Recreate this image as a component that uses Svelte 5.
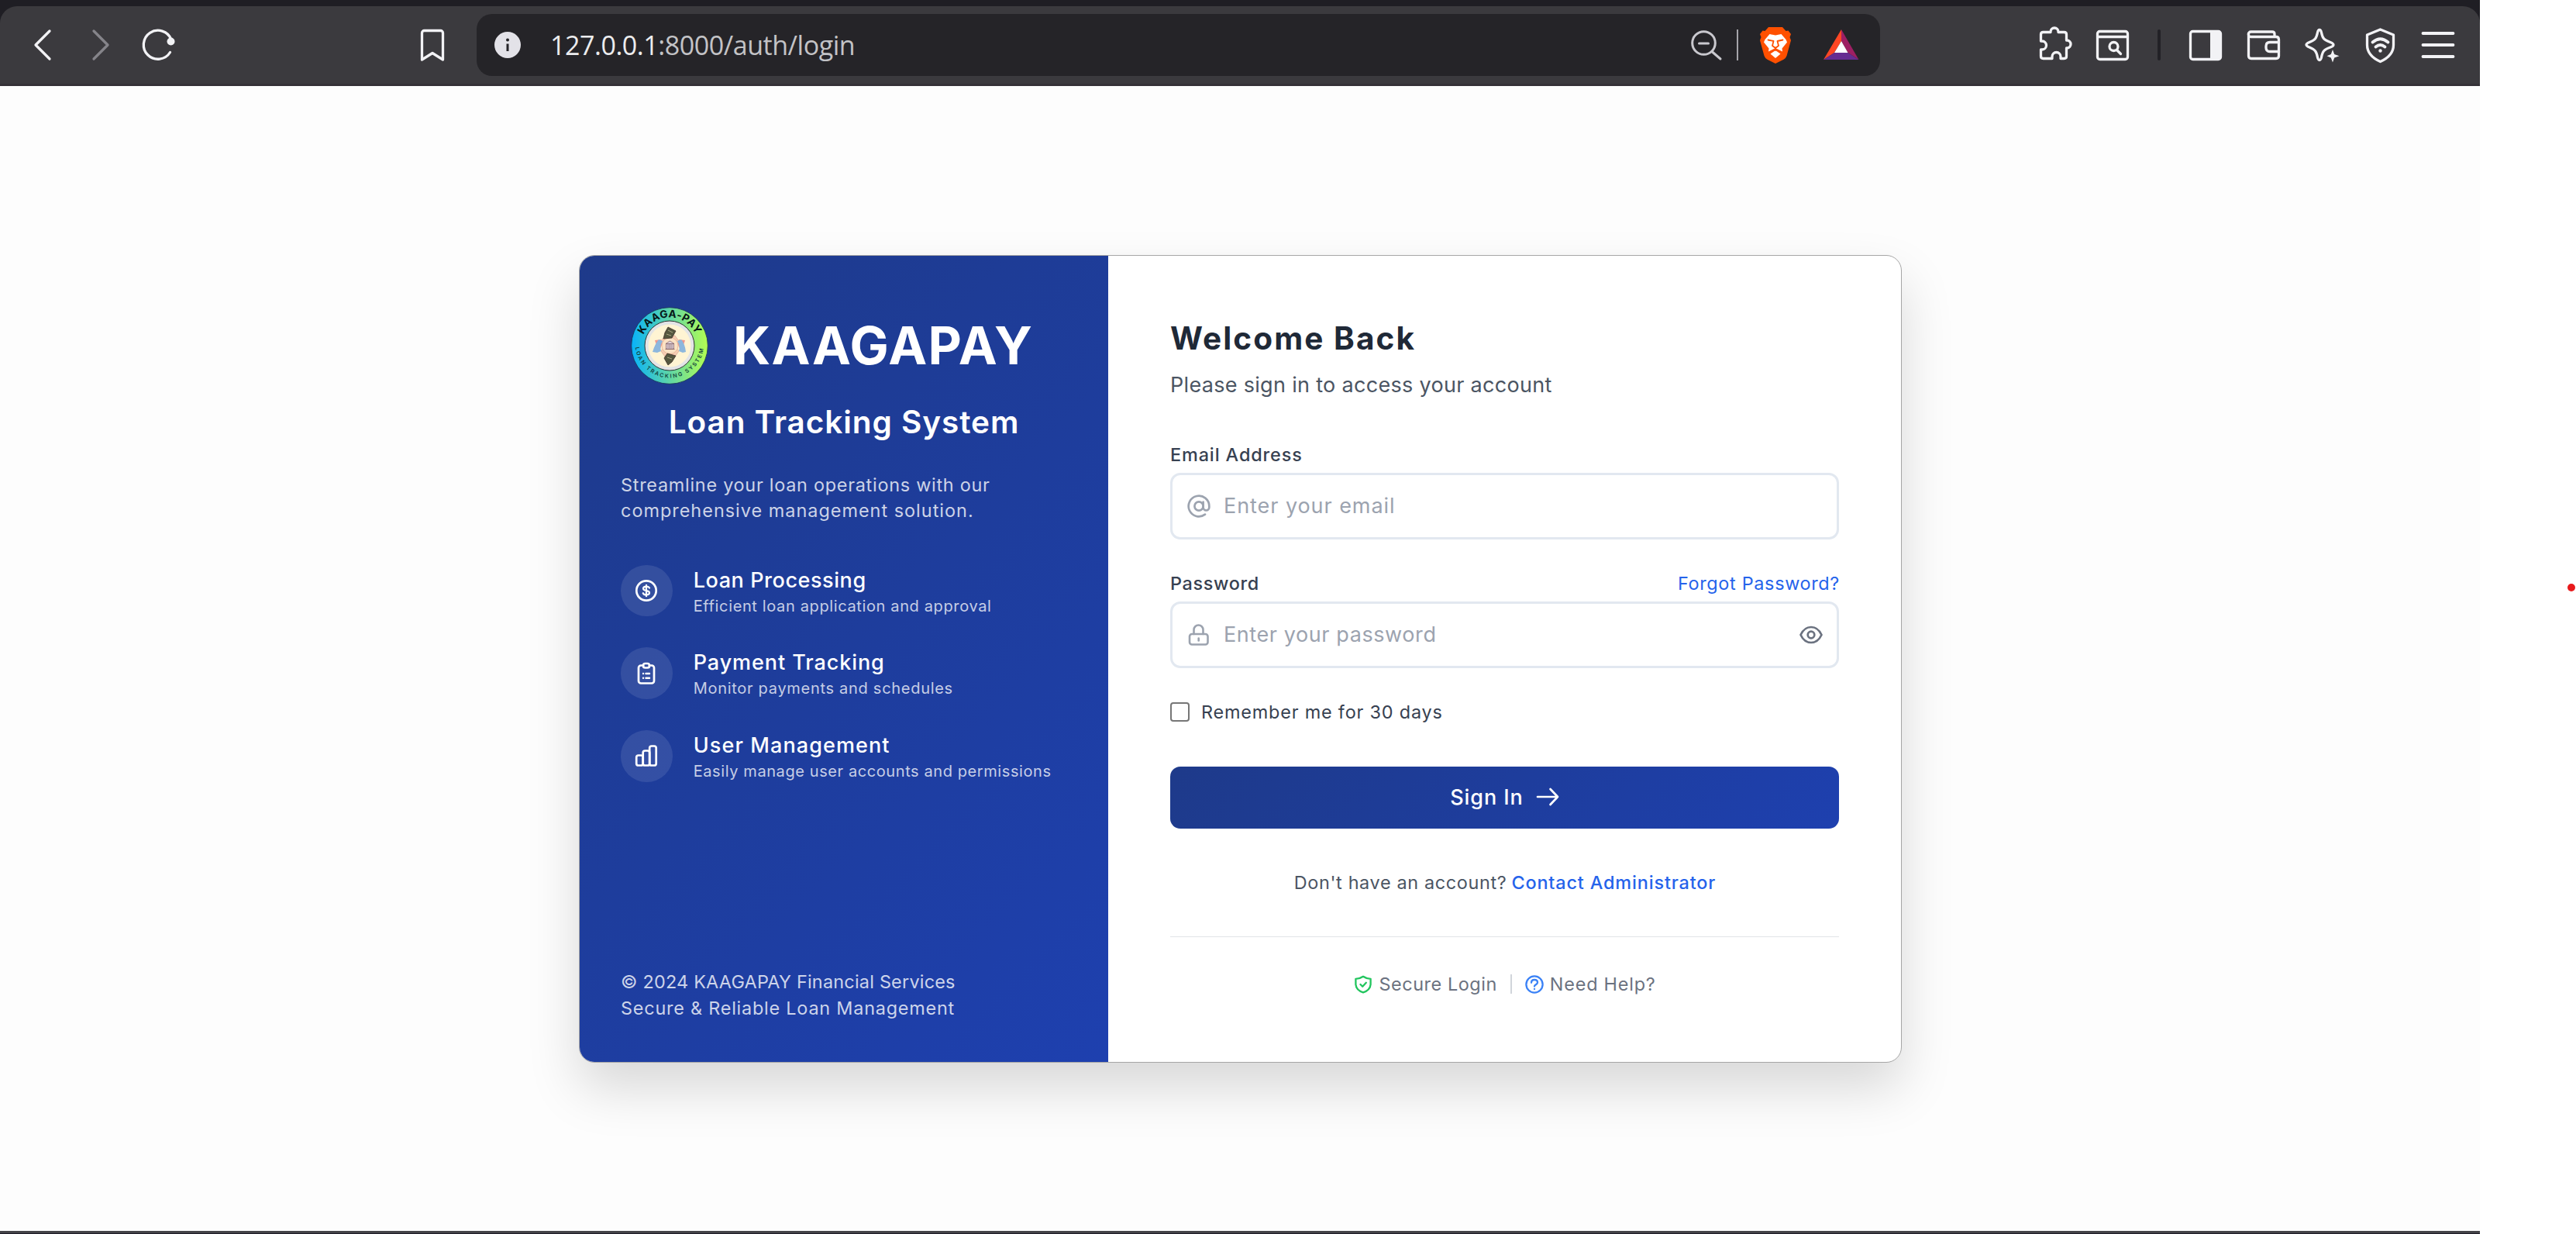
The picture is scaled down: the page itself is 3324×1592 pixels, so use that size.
<script>
  const features = [
    { icon: 'dollar', title: 'Loan Processing', text: 'Efficient loan application and approval', cls: 'f1' },
    { icon: 'clipboard', title: 'Payment Tracking', text: 'Monitor payments and schedules', cls: 'f2' },
    { icon: 'bars', title: 'User Management', text: 'Easily manage user accounts and permissions', cls: 'f3' }
  ];
</script>

<div class="screen">
  <div class="browser">
    <header class="tabstrip">
      <div class="toolbar">
        <svg class="ico back" viewBox="0 0 48 48"><path d="M33 6 15 24l18 18" /></svg>
        <svg class="ico forward" viewBox="0 0 48 48"><path d="M15 6l18 18-18 18" /></svg>
        <svg class="ico reload" viewBox="0 0 48 48"><path d="M39.500 33.500A18.500 18.500 0 1 1 41 17" /><circle class="solid" cx="40.500" cy="19.500" r="5" /></svg>
        <svg class="ico bookmark" viewBox="0 0 48 48"><path d="M10.500 43V8.500a3 3 0 0 1 3-3h21a3 3 0 0 1 3 3V43L24 34.500z" /></svg>

        <div class="address">
          <svg class="info" viewBox="0 0 34 34"><circle cx="17" cy="17" r="17" fill="#e3e2e8" /><path d="M17 15.500v9.500" stroke="#252428" stroke-width="3" /><circle cx="17" cy="10.500" r="2" fill="#252428" /></svg>
          <span class="url"><b>127.0.0.1</b>:8000/auth/login</span>
          <svg class="ico zoomout" viewBox="0 0 48 48"><circle cx="20.500" cy="21.500" r="14.800" /><path d="M31 32.500 42 42M14.500 22h12" /></svg>
          <i class="bar-sep"></i>
          <svg class="ico brave" viewBox="0 0 48 48">
            <path fill="#ff5000" d="M15 1h18l4.500 5 3-.500L44 10l-1.500 4 1.500 4-5.500 20q-1 3-4 4.800L24 48l-10.500-5.200q-3-1.800-4-4.800L4 18l1.500-4L4 10l3.500-4.500 3 .500z" />
            <path fill="#fff" d="M16.500 10 24 11.500l7.500-1.500 6 7 1.500 3.500-6.500 8 .5 4-9-4.500-9 4.500.5-4-6.500-8 1.500-3.500z" />
            <path fill="#fff" d="M17.500 35.500 24 31l6.500 4.500L24 41z" />
            <path d="m14.500 17.500 7 1.500-1.500 6 4 3 4-3-1.500-6 7-1.500" stroke="#ff5000" stroke-width="1.800" fill="none" />
            <path d="M24 27.500V31" stroke="#ff5000" stroke-width="1.800" />
          </svg>
          <svg class="ico bat" viewBox="0 0 48 48"><path fill="#ff4724" d="M24 4 1 43l14-9 9-15z" /><path fill="#9e1f63" d="m24 4 22.500 39-14-9L24 19z" /><path fill="#662d91" d="M1 43h45.500l-14-9H15z" /><path fill="#fff" d="m24 19 8.500 15H15z" /></svg>
        </div>

        <svg class="ico puzzle" viewBox="0 0 48 48"><path d="M17 7.500V7a5 5 0 0 1 10 0v.500h7.500q3 0 3 3V18h1a5 5 0 0 1 4.500 5 5 5 0 0 1-4.500 5h-1v10.500q0 3-3 3H30V39a5.500 5.500 0 0 0-11 0v2.500H7.500q-3 0-3-3V30H6a5.500 5.500 0 0 0 0-11H4.500v-8.500q0-3 3-3z" /></svg>
        <svg class="ico pagefind" viewBox="0 0 48 48"><rect x="4.500" y="6.500" width="39" height="36" rx="3" /><path d="M5 13.500h38" /><circle cx="25.500" cy="26" r="5.500" /><path d="m29.500 30.500 5 5" /></svg>
        <i class="tool-sep"></i>
        <svg class="ico panel" viewBox="0 0 48 48"><rect x="4.500" y="6.500" width="39" height="36" rx="3" /><path class="solid" d="M30 6.500h11q2.500 0 2.500 2.500v31q0 2.500-2.500 2.500H30z" /></svg>
        <svg class="ico wallet" viewBox="0 0 48 48"><path d="M4.500 10v28q0 3.500 3.500 3.500h32q3.500 0 3.500-3.500V17q0-3.500-3.500-3.500H7.500a3.200 3.200 0 0 1 0-6.500H35q3 0 3 3v3" /><path d="M43.500 20.500H32q-5 0-5 5v2q0 5 5 5h11.500" /></svg>
        <svg class="ico spark" viewBox="0 0 48 48"><path d="M21 4.500c1.500 0 2 1 2.500 3.500 1.500 7.500 3 9.500 11.500 12.500 2.500 1 4 1.800 4 3.300s-1.500 2.300-4 3.200C26.500 30 25 32.500 23.500 40c-.5 2.500-1 3.500-2.500 3.500S19 42.500 18.500 40c-1.500-7.500-3-10-10.500-13-2.500-1-4-1.700-4-3.200s1.500-2.300 4-3.300C15.500 17.500 17 15.500 18.500 8c.5-2.500 1-3.500 2.500-3.500z" /><path class="solid" d="m38 30 2.200 6 6.300 2.200-6.300 2.300L38 46.500l-2.200-6-5.300-2.300 5.300-2.200z" /></svg>
        <svg class="ico vpn" viewBox="0 0 48 48"><path d="M24.500 4 41.500 11v13c0 10-7 17-17 21.500C14.500 41 7.500 34 7.500 24V11z" /><path d="M14.500 20.500q10-8.500 20 0M18.500 26.500q6-5 12 0" stroke-width="3.800" /><circle class="solid" cx="24.500" cy="31.500" r="2.200" /></svg>
        <svg class="ico menu" viewBox="0 0 48 48"><path d="M4.500 9h39M4.500 24h39M4.500 39h39" /></svg>
      </div>
    </header>

    <main class="page">
      <section class="card">
        <aside class="brand">
          <div class="brand-row">
            <svg class="logo" viewBox="0 0 100 100">
              <defs>
                <linearGradient id="ring" x1="0" y1="0" x2="1" y2="0"><stop offset="0" stop-color="#08b2fb" /><stop offset=".5" stop-color="#5fd6a6" /><stop offset="1" stop-color="#b3fd52" /></linearGradient>
                <path id="arcTop" d="M13.500 50A36.500 36.500 0 0 1 86.500 50" />
                <path id="arcBottom" d="M5.500 47A44.500 44.500 0 0 0 94.500 47" />
              </defs>
              <circle cx="50" cy="50" r="49.300" fill="url(#ring)" stroke="#16324f" stroke-width=".8" />
              <circle cx="50" cy="50" r="32" fill="#e3e4e6" stroke="#222" stroke-width=".9" />
              <circle cx="50" cy="50" r="27.500" fill="#fff4d3" />
              <text class="logo-top"><textPath href="#arcTop" startOffset="50%" text-anchor="middle">KAAGA-PAY</textPath></text>
              <text class="logo-bottom"><textPath href="#arcBottom" startOffset="50%" text-anchor="middle">LOAN TRACKING SYSTEM</textPath></text>
              <path fill="#f0978c" d="m31 43 8-1 2 5-5 11-5-3 2-6zM70 43l-8-1-2 5 5 11 5-3-2-6z" />
              <path fill="#f6cdb4" stroke="#d79f86" stroke-width=".6" d="m39 44 5-7 13 0 5 7-3 4-9-4-8 4zM39 57l5 7h13l5-7-3-4-9 5-8-5z" />
              <path fill="#8db7dd" d="m36 42 5 2q-4 6-2 13l-5 2-6-1q3-10 8-16zM65 42l-5 2q4 6 2 13l5 2 4-1q-1-10-6-16z" />
              <circle cx="50.500" cy="50" r="10.500" fill="#fbe2c4" stroke="#e7b18f" stroke-width=".8" />
              <path fill="#55573f" stroke="#41312b" stroke-width=".8" d="m48 26 10 5-5 9-11 1 2-8zM47 60l11 3-5 8-5 4-5-9z" />
              <path stroke="#a9a583" stroke-width="1" d="m48 30 6 3M46 35l6 2M47 65l6 2" />
              <path fill="#e3d4dc" stroke="#7c5a60" stroke-width=".7" d="M45.500 47 50.500 44l5 3v7h-10z" />
              <path stroke="#7c5a60" stroke-width=".8" d="M48 48v5M50.500 48v5M53 48v5M44.500 54.500h12M45 47.500h11" />
            </svg>
            <h1>KAAGAPAY</h1>
          </div>
          <h2>Loan Tracking System</h2>
          <p class="lead"><span class="l1">Streamline your loan operations with our</span><span class="l2">comprehensive management solution.</span></p>

          <ul class="features">
            {#each features as f}
              <li class={f.cls}>
                <span class="disc">
                  <svg viewBox="0 0 32 32">
                    {#if f.icon === 'dollar'}
                      <circle cx="16" cy="16" r="12.700" />
                      <path d="M20 12.600c-.6-1.400-2-2-4-2-2.400 0-4 1-4 2.700s1.500 2.300 4 2.700 4 1 4 2.700-1.600 2.700-4 2.700c-2.200 0-3.600-.8-4.200-2.200M16 8.800v14.400" stroke-width="2.200" />
                    {:else if f.icon === 'clipboard'}
                      <path d="M12 5.500H9A3 3 0 0 0 6 8.500v17a3 3 0 0 0 3 3h14a3 3 0 0 0 3-3v-17a3 3 0 0 0-3-3h-3" />
                      <rect x="12" y="3" width="8" height="5.500" rx="2.500" />
                      <path d="M15.500 16H20M15.500 21.700H20M12 16h.01M12 21.700h.01" stroke-width="2.500" />
                    {:else}
                      <rect x="3.200" y="15.500" width="8.500" height="13" rx="2.600" />
                      <rect x="11.700" y="9.500" width="8.500" height="19" rx="2.600" />
                      <rect x="20.200" y="3.500" width="8.500" height="25" rx="2.600" />
                    {/if}
                  </svg>
                </span>
                <div><strong>{f.title}</strong><small>{f.text}</small></div>
              </li>
            {/each}
          </ul>

          <footer><span class="c1">© 2024 KAAGAPAY Financial Services</span><span class="c2">Secure &amp; Reliable Loan Management</span></footer>
        </aside>

        <div class="panel-form">
          <h3>Welcome Back</h3>
          <p class="sub">Please sign in to access your account</p>

          <div class="label-row"><label class="lab-email" for="email">Email Address</label></div>
          <div class="field">
            <svg class="lead-ico" viewBox="0 0 24 24"><circle cx="12" cy="12" r="4.200" /><path d="M16.200 8v5.200a2.900 2.900 0 0 0 5.800 0V12a10 10 0 1 0-4 8" /></svg>
            <input id="email" class="in-email" type="text" placeholder="Enter your email" />
          </div>

          <div class="label-row second"><label class="lab-pass" for="pass">Password</label><a class="forgot" href="#forgot">Forgot Password?</a></div>
          <div class="field">
            <svg class="lead-ico lock" viewBox="0 0 32 32"><path d="M9.500 15V9.500a6 6 0 0 1 12 0V15" /><rect x="4" y="15" width="23.500" height="13.500" rx="3" /><path d="M15.700 20.500v3" /></svg>
            <input id="pass" class="in-pass" type="text" placeholder="Enter your password" />
            <svg class="eye" viewBox="0 0 30 24"><path d="M1.500 12C5 4.500 10 2 15 2s10 2.500 13.500 10C25 19.500 20 22 15 22S5 19.500 1.500 12z" /><circle cx="15" cy="12" r="4.300" /></svg>
          </div>

          <label class="remember"><input type="checkbox" /><span>Remember me for 30 days</span></label>

          <button class="signin" type="button"><span>Sign In</span><svg viewBox="0 0 30 24"><path d="M2 12h26M18.500 2 28 12l-9.500 10" /></svg></button>

          <p class="contact"><span>Don't have an account?</span><a href="#admin">Contact Administrator</a></p>

          <div class="links">
            <span class="link secure"><svg viewBox="0 0 24 24"><path d="M12 1.800c2.800 2 5.800 2.900 9.600 3v6.400c0 5.500-3.600 9.200-9.600 11.200-6-2-9.600-5.700-9.600-11.200V4.800c3.800-.1 6.800-1 9.600-3z" /><path d="m8.500 12 2.700 2.700 4.600-4.900" /></svg><em>Secure Login</em></span>
            <i class="link-sep"></i>
            <span class="link help"><svg viewBox="0 0 24 24"><circle cx="12" cy="12" r="10.600" /><path d="M8 9.800c0-2.300 1.700-3.800 4-3.800s4 1.400 4 3.500c0 2.600-4 2.700-4 5M12 17.800v.3" /></svg><em>Need Help?</em></span>
          </div>
        </div>
      </section>
    </main>
    <div class="taskbar-edge"></div>
  </div>
  <div class="gutter"><i class="dot"></i></div>
</div>

<style>
  :global(body) { background: #fff; overflow: hidden; }
  * { box-sizing: border-box; }
  h1, h2, h3, p, ul { margin: 0; padding: 0; }
  a { text-decoration: none; }
  .screen { display: flex; width: 3324px; height: 1592px; font-family: Inter, "Liberation Sans", sans-serif; background: #fff; }
  .browser { display: flex; flex-direction: column; width: 3200px; height: 1592px; }
  .gutter { width: 124px; display: flex; align-items: flex-start; justify-content: flex-end; padding: 753px 1px 0 0; }
  .dot { width: 10px; height: 10px; border-radius: 50%; background: #e81a1c; }

  .tabstrip { background: #1f1e24; padding-top: 8px; flex: none; }
  .toolbar { display: flex; align-items: center; height: 103px; padding: 0 30px 0 31px; background: #3b3a3e; border-bottom: 3px solid #353238; border-radius: 22px 22px 0 0; }
  .ico { width: 48px; height: 48px; flex: none; fill: none; stroke: #f2f2f5; stroke-width: 3.300; stroke-linecap: round; stroke-linejoin: round; overflow: visible; }
  .solid { fill: #f2f2f5; stroke: none; }
  .forward { margin-left: 27px; stroke: #85848a; }
  .reload { margin-left: 26px; }
  .bookmark { margin-left: 306px; }
  .address { display: flex; align-items: center; width: 1811px; height: 80px; margin: 0 203px 0 33px; padding: 0 26px 0 23px; border-radius: 20px; background: #252428; }
  .info { width: 34px; height: 34px; flex: none; }
  .url { flex: 1; margin-left: 38px; font: 34px/48px "Open Sans", "Noto Sans", sans-serif; letter-spacing: -.460px; color: #c3c3c6; white-space: nowrap; }
  .url b { font-weight: 400; color: #ececee; }
  .zoomout { stroke: #c9c8ce; stroke-width: 3; }
  .bar-sep { width: 2px; height: 40px; margin: 0 24px 0 15px; background: #a5a4aa; }
  .brave, .bat { stroke: none; }
  .bat { margin-left: 37px; }
  .pagefind { margin-left: 25px; }
  .tool-sep { width: 4px; height: 40px; margin: 0 34px; border-radius: 2px; background: #222126; }
  .wallet, .spark, .vpn, .menu { margin-left: 27px; }
  .menu { stroke-width: 3.800; }

  .page { flex: 1; display: flex; align-items: flex-start; justify-content: center; padding: 218px 0 0 1px; background: #fdfdfd; }
  .taskbar-edge { height: 4px; flex: none; background: #444448; border-bottom: 1px solid #1f1e28; }
  .card { display: flex; width: 1707px; height: 1042px; border: 1px solid #a6a6a6; border-radius: 20px; background: #fff; overflow: hidden; box-shadow: 0 33px 67px rgba(0, 0, 0, .15); }

  .brand { display: flex; flex-direction: column; width: 682px; padding: 66px 53px 53px; color: #fff; background: linear-gradient(135deg, #1e3a8a, #1e40af); }
  .brand-row { display: flex; align-items: center; gap: 32px; height: 100px; padding-left: 13px; }
  .logo { width: 100px; height: 100px; flex: none; fill: none; }
  .logo-top { font: 700 13.500px Inter, sans-serif; letter-spacing: .4px; fill: #071616; }
  .logo-bottom { font: 600 7px Inter, sans-serif; letter-spacing: 2px; fill: #12413c; }
  h1 { font-size: 67px; line-height: 80px; font-weight: 700; letter-spacing: 1.400px; }
  h2 { margin-top: 25px; font-size: 40.500px; line-height: 48px; font-weight: 600; letter-spacing: .940px; text-align: center; white-space: nowrap; }
  .lead, footer { display: flex; flex-direction: column; font-size: 23.400px; line-height: 33.300px; color: rgba(255, 255, 255, .78); white-space: nowrap; }
  .lead { margin-top: 40px; }
  .l1 { letter-spacing: .745px; }
  .l2 { letter-spacing: 1.020px; }
  .features { display: flex; flex-direction: column; gap: 40px; margin-top: 53px; list-style: none; }
  .features li { display: flex; gap: 27px; height: 66.700px; }
  .disc { display: grid; place-items: center; width: 66.700px; height: 66.700px; flex: none; border-radius: 50%; background: rgba(255, 255, 255, .1); }
  .disc svg { width: 32px; height: 32px; fill: none; stroke: #fff; stroke-width: 2.700; stroke-linecap: round; stroke-linejoin: round; }
  strong, small { display: block; white-space: nowrap; }
  strong { font-size: 27px; line-height: 40px; font-weight: 500; }
  small { font-size: 20px; line-height: 26.700px; color: rgba(255, 255, 255, .75); }
  .f1 strong { letter-spacing: .570px; }
  .f1 small { letter-spacing: .630px; }
  .f2 strong { letter-spacing: .920px; }
  .f2 small { letter-spacing: .710px; }
  .f3 strong { letter-spacing: 1.100px; }
  .f3 small { letter-spacing: .590px; }
  footer { margin-top: auto; }
  .c1 { letter-spacing: .230px; }
  .c2 { letter-spacing: .790px; }

  .panel-form { flex: 1; display: flex; flex-direction: column; padding: 80px 80px 0; }
  h3 { font-size: 40.500px; line-height: 53px; font-weight: 700; letter-spacing: 2.080px; color: #1f2937; }
  .sub { margin-top: 14px; font-size: 27px; line-height: 40px; letter-spacing: .310px; color: #4b5563; }
  .label-row { display: flex; justify-content: space-between; margin-top: 53px; font-size: 23.400px; line-height: 33px; }
  .label-row.second { margin-top: 40px; }
  .label-row label { font-weight: 500; color: #374151; }
  .lab-email { letter-spacing: .900px; }
  .lab-pass { letter-spacing: .650px; }
  .forgot { letter-spacing: .680px; color: #2563eb; margin-right: -1px; }
  .field { display: flex; align-items: center; height: 86px; margin-top: 7px; padding: 0 18px; border: 3px solid #e2e8f0; border-radius: 13px; }
  .lead-ico { width: 32px; height: 32px; flex: none; fill: none; stroke: #9ca3af; stroke-width: 2; stroke-linecap: round; stroke-linejoin: round; }
  .lock { stroke-width: 2.600; }
  .field input { flex: 1; min-width: 0; height: 60px; margin: 0 0 2px 16px; padding: 0; border: 0; outline: 0; background: none; font: 27px Inter, sans-serif; color: #1f2937; }
  .field .in-email { letter-spacing: .940px; }
  .field .in-pass { letter-spacing: .590px; }
  .field input::placeholder { color: #9ca3af; opacity: 1; }
  .eye { width: 30px; height: 24px; fill: none; stroke: #6b7280; stroke-width: 2.700; stroke-linejoin: round; }
  .remember { display: flex; align-items: center; gap: 15px; height: 26px; margin-top: 43px; font-size: 23.400px; letter-spacing: .820px; color: #374151; }
  .remember input { appearance: none; width: 25px; height: 25px; margin: 0; border: 2px solid #767676; border-radius: 4px; background: #fff; }
  .signin { display: flex; align-items: center; justify-content: center; gap: 16px; height: 80px; margin-top: 58px; padding: 0 0 2px; border: 0; border-radius: 13px; background: linear-gradient(135deg, #1e3a8a, #1e40af); color: #fff; font: 500 27px Inter, sans-serif; letter-spacing: .930px; }
  .signin svg { width: 30px; height: 24px; fill: none; stroke: #fff; stroke-width: 2.700; stroke-linecap: round; stroke-linejoin: round; }
  .contact { display: flex; justify-content: center; gap: 6px; margin-top: 53px; padding-left: 1px; font-size: 23.400px; line-height: 33px; color: #4b5563; }
  .contact span { letter-spacing: .660px; }
  .contact a { font-weight: 500; letter-spacing: .870px; color: #2563eb; }
  .links { display: flex; align-items: center; justify-content: center; gap: 17px; margin-top: 53px; padding: 44px 0 0 1px; border-top: 1px solid #e2e4e8; font-size: 23.400px; line-height: 33px; color: #6b7280; }
  .link { display: flex; align-items: center; gap: 8px; }
  .link svg { width: 24px; height: 24px; fill: none; stroke-width: 2.300; stroke-linecap: round; stroke-linejoin: round; }
  .link em { font-style: normal; }
  .secure em { letter-spacing: .570px; }
  .help em { letter-spacing: .790px; }
  .secure svg { stroke: #22c55e; }
  .help svg { stroke: #3b82f6; }
  .link-sep { width: 2px; height: 25px; background: #d1d5db; }
</style>
